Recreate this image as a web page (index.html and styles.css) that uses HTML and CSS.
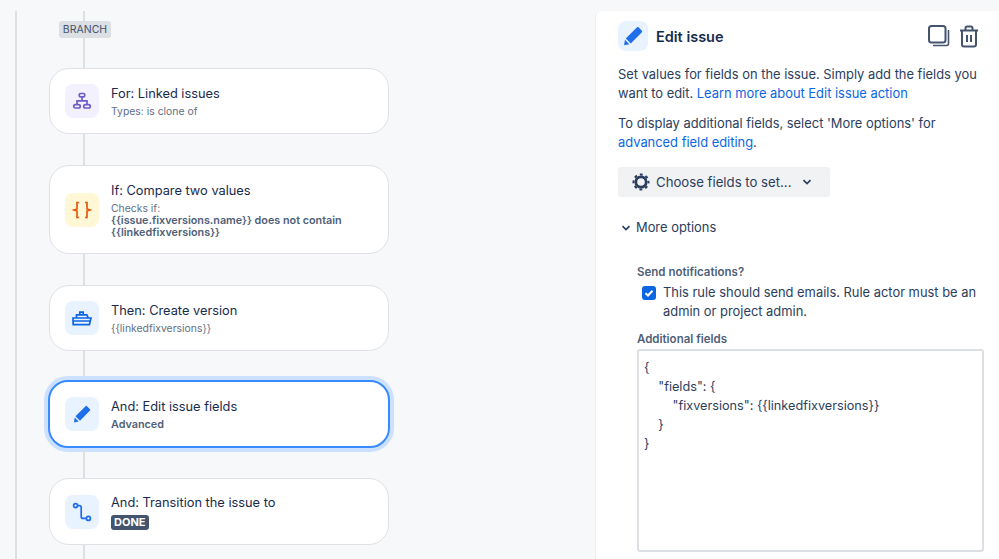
FILE: index.html
```html
<!DOCTYPE html>
<html lang="en">
<head>
<meta charset="utf-8">
<title>Edit issue</title>
<link rel="stylesheet" href="styles.css">
</head>
<body>
<div class="page">
  <section class="tree">
    <div class="line h10"></div>
    <div class="tag">BRANCH</div>
    <div class="line h30"></div>
    <div class="card h66">
      <div class="ico purple"><svg width="20" height="20" viewBox="0 0 20 20" fill="none" stroke="#6e5dc6" stroke-width="1.700"><rect x="7.300" y="2.500" width="5.400" height="3.400" rx="1.200"/><path d="M10 5.900v4M5 13.500v-3.600h10v3.600"/><rect x="1.700" y="13.600" width="6.600" height="3.400" rx="1.700"/><rect x="11.700" y="13.600" width="6.600" height="3.400" rx="1.700"/></svg></div>
      <div class="txt"><div class="ttl">For: Linked issues</div><div class="sub">Types: is clone of</div></div>
    </div>
    <div class="line h31"></div>
    <div class="card h89">
      <div class="ico yellow"><svg width="20" height="20" viewBox="0 0 20 20" fill="none" stroke="#e5590c" stroke-width="1.700"><path d="M7 2.500H5v6.500L2 10l3 1v6.500h2M13 2.500h2v6.500l3 1-3 1v6.500h-2"/></svg></div>
      <div class="txt"><div class="ttl">If: Compare two values</div><div class="sub">Checks if:<br><b>{{issue.fixversions.name}} does not contain {{linkedfixversions}}</b></div></div>
    </div>
    <div class="line h31"></div>
    <div class="card h66">
      <div class="ico blue"><svg width="20" height="20" viewBox="0 0 20 20" fill="none" stroke="#0c66e4" stroke-width="1.700"><path d="M4.500 10V6.800h10.300l1.500 3.200M7.800 6.800V4.200h3.400v2.600"/><path d="M1 10h18l-1.600 6.600H1.200zM1.200 13h17"/></svg></div>
      <div class="txt"><div class="ttl">Then: Create version</div><div class="sub">{{linkedfixversions}}</div></div>
    </div>
    <div class="line h29"></div>
    <div class="card selected">
      <div class="ico blue"><svg width="18" height="18" viewBox="0 0 18 18" fill="#1f6fec"><path d="M12.600 1.200a1 1 0 0 1 1.400 0l3 3a1 1 0 0 1 0 1.400L7 15.700 2.500 11.200zM1.700 12.400l4 4-4.700 1z"/></svg></div>
      <div class="txt"><div class="ttl">And: Edit issue fields</div><div class="sub"><b>Advanced</b></div></div>
    </div>
    <div class="line h30"></div>
    <div class="card h67">
      <div class="ico blue"><svg width="20" height="20" viewBox="0 0 20 20" fill="none" stroke="#1f6fec" stroke-width="1.700"><circle cx="3.600" cy="3.600" r="2"/><circle cx="16.400" cy="16.400" r="2"/><path d="M5.600 3.600h1.600c1.200 0 2 .8 2 2v8.800c0 1.200.8 2 2 2h3.200"/></svg></div>
      <div class="txt"><div class="ttl">And: Transition the issue to</div><div class="lozenge">DONE</div></div>
    </div>
    <div class="line h20"></div>
  </section>
  <aside class="panel">
    <header class="phead">
      <div class="ico big blue"><svg width="20" height="20" viewBox="0 0 18 18" fill="#1f6fec"><path d="M12.600 1.200a1 1 0 0 1 1.400 0l3 3a1 1 0 0 1 0 1.400L7 15.700 2.500 11.200zM1.700 12.400l4 4-4.700 1z"/></svg></div>
      <h1 class="ptitle">Edit issue</h1>
      <div class="actions">
        <svg width="22" height="22" viewBox="0 0 22 22" fill="none" stroke="#44546f" stroke-width="2"><rect x="1" y="1" width="16.500" height="16.500" rx="2.500"/><path d="M20.500 5v13.500a2 2 0 0 1-2 2H5" stroke-width="1.600"/></svg>
        <svg width="20" height="23" viewBox="0 0 20 23" fill="none" stroke="#44546f" stroke-width="2"><path d="M1 5.500h18M6.500 5.500V3a1.600 1.600 0 0 1 1.600-1.600h3.800A1.600 1.600 0 0 1 13.500 3v2.500M3 5.500v14a2 2 0 0 0 2 2h10a2 2 0 0 0 2-2v-14M8 10v7M12 10v7"/></svg>
      </div>
    </header>
    <p class="para first">Set values for fields on the issue. Simply add the fields you want to edit. <a class="lnk">Learn more about Edit issue action</a></p>
    <p class="para second">To display additional fields, select 'More options' for <a class="lnk">advanced field editing</a>.</p>
    <button class="btn">
      <svg width="18" height="18" viewBox="0 0 18 18" fill="none" stroke="#2c3e5d"><circle cx="9" cy="9" r="5.200" stroke-width="2.800"/><circle cx="9" cy="9" r="7.500" stroke-width="2" stroke-dasharray="2.900 3" stroke-dashoffset="1.450"/></svg>
      <span>Choose fields to set...</span>
      <svg class="chev" width="10" height="6" viewBox="0 0 10 6" fill="none" stroke="#2c3e5d" stroke-width="1.700"><path d="M1.500 1.200L5 4.600l3.500-3.400"/></svg>
    </button>
    <div class="more">
      <svg width="10" height="6" viewBox="0 0 10 6" fill="none" stroke="#2c3e5d" stroke-width="1.700"><path d="M1.500 1.200L5 4.600l3.500-3.400"/></svg>
      <span>More options</span>
    </div>
    <div class="form">
      <label class="lbl">Send notifications?</label>
      <div class="check">
        <span class="box"><svg width="14" height="14" viewBox="0 0 14 14" fill="none" stroke="#fff" stroke-width="2"><path d="M3.500 7.200l2.500 2.300 4.500-4.800"/></svg></span>
        <span>This rule should send emails. Rule actor must be an admin or project admin.</span>
      </div>
      <label class="lbl second-lbl">Additional fields</label>
      <div class="area">{
    "fields": {
        "fixversions": {{linkedfixversions}}
    }
}</div>
    </div>
  </aside>
</div>
</body>
</html>
```
FILE: styles.css
```css
* { box-sizing: border-box; }
html, body { margin: 0; height: 100%; overflow: hidden; }
body { background: #f7f8f9; font-family: Inter, "Noto Sans", sans-serif; color: #172b4d; }
.page { display: flex; height: 559px; padding-top: 11px; }
.tree { width: 580px; margin-left: 15px; border-left: 2px solid #dcdfe4; padding-left: 32px; display: flex; flex-direction: column; flex: none; }
.line { width: 2px; margin-left: 34px; background: #dcdfe4; flex: none; }
.h10 { height: 10px; }
.h20 { height: 20px; }
.h29 { height: 29px; }
.h30 { height: 30px; }
.h31 { height: 31px; }
.tag { width: 52px; height: 17px; margin-left: 10px; border-radius: 3px; background: #dcdfe4; color: #44546f; font-size: 10.500px; line-height: 17px; text-align: center; flex: none; }
.card { width: 340px; display: flex; align-items: center; padding: 0 15px; gap: 12px; background: #fff; border: 1px solid #dfe1e6; border-radius: 20px; flex: none; }
.h66 { height: 66px; }
.h67 { height: 67px; }
.h89 { height: 89px; }
.selected { border: 2px solid #388bff; box-shadow: 0 0 0 4px #cce0ff; margin: 0 -1px; width: 342px; height: 68px; }
.ico { width: 34px; height: 34px; border-radius: 8px; display: flex; align-items: center; justify-content: center; flex: none; }
.purple { background: #f3f0ff; }
.yellow { background: #fff7d6; }
.blue { background: #e9f2ff; }
.txt { min-width: 0; display: flex; flex-direction: column; }
.ttl { font-size: 12.800px; line-height: 20px; color: #172b4d; }
.sub { font-size: 10.400px; line-height: 12px; margin-top: 2px; color: #626f86; }
.sub b { font-size: 10.800px; font-weight: 600; color: #505f79; }
.lozenge { align-self: flex-start; margin-top: 2px; padding: 0 3px; height: 15px; line-height: 15px; font-size: 11px; font-weight: 700; color: #fff; background: #44546f; border-radius: 3px; }
.panel { flex: 1; min-width: 0; background: #fff; border-left: 1px solid #ebecf0; border-top-left-radius: 6px; padding: 10px 0 0 22px; }
.phead { display: flex; align-items: center; gap: 8px; height: 30px; padding-right: 20px; }
.big { width: 30px; height: 30px; }
.ptitle { margin: 0; font-size: 14.500px; font-weight: 600; color: #172b4d; }
.actions { margin-left: auto; display: flex; align-items: center; gap: 9px; }
.para { margin: 0; font-size: 12.900px; line-height: 19px; color: #2c3e5d; width: 368px; }
.first { margin-top: 14px; }
.second { margin-top: 11px; width: 345px; }
.lnk { color: #0c66e4; }
.btn { display: flex; align-items: center; gap: 6px; width: 212px; height: 30px; margin-top: 15px; padding: 0 0 0 14px; background: #f1f2f4; border: 0; border-radius: 3px; font: inherit; font-size: 13.200px; color: #2c3e5d; }
.chev { margin-left: 5px; }
.more { display: flex; align-items: center; gap: 5px; margin-top: 21px; padding-left: 3px; font-size: 12.900px; line-height: 19px; color: #2c3e5d; }
.form { margin-left: 19px; margin-top: 27px; width: 347px; }
.lbl { display: block; font-size: 11.500px; line-height: 16px; font-weight: 600; color: #505f79; }
.check { display: flex; gap: 7px; padding-left: 5px; margin-top: 3px; font-size: 12.900px; line-height: 19px; color: #2c3e5d; }
.box { width: 14px; height: 14px; margin-top: 3px; border-radius: 3px; background: #0c66e4; flex: none; display: flex; }
.second-lbl { margin-top: 10px; }
.area { height: 203px; margin-top: 2px; padding: 7px 5px; border: 2px solid #dcdfe4; border-radius: 3px; font-size: 12.700px; line-height: 19px; color: #2c3e5d; white-space: pre; }
```
